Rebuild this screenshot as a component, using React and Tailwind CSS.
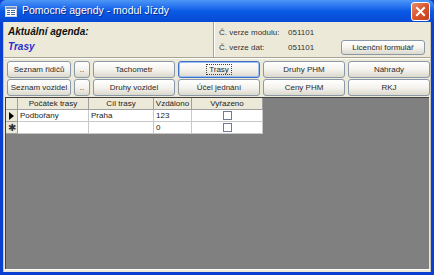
import React from 'react'

const font = { fontFamily: '"Liberation Sans", Arial, sans-serif' }

function XpButton({ children, focused, className = '' }) {
  return (
    <div
      className={`flex items-center justify-center h-[17px] rounded-[3px] border text-[8px] text-[#2a2a2a] bg-gradient-to-b from-white via-[#f4f3ee] to-[#dcd9cc] ${
        focused ? 'border-[#3c6fc8] shadow-[inset_0_0_0_1px_#9cc0f4]' : 'border-[#8a98a8]'
      } ${className}`}
    >
      {focused ? (
        <span className="px-[2px] border border-dotted border-[#444] leading-[9px]">{children}</span>
      ) : (
        children
      )}
    </div>
  )
}

const rowsTop = ['Seznam řidičů', '..', 'Tachometr', 'Trasy', 'Druhy PHM', 'Náhrady']
const rowsBottom = ['Seznam vozidel', '..', 'Druhy vozidel', 'Účel jednání', 'Ceny PHM', 'RKJ']
const widths = ['w-[64px]', 'w-[16px]', 'w-[82px]', 'w-[82px]', 'w-[82px]', 'w-[82px]']

function ButtonRow({ labels }) {
  return (
    <div className="flex gap-[3px]">
      {labels.map((l, i) => (
        <XpButton key={i} focused={l === 'Trasy'} className={widths[i]}>
          {l}
        </XpButton>
      ))}
    </div>
  )
}

function Checkbox() {
  return <div className="w-[9px] h-[9px] bg-white border border-[#6f7c8c]" />
}

export default function App() {
  return (
    <div className="w-[434px] h-[275px] flex flex-col bg-[#0a3fd0] overflow-hidden" style={font}>
      {/* Title bar */}
      <div className="h-[22px] shrink-0 flex items-center pl-[5px] pr-[4px] bg-gradient-to-b from-[#4d96f7] via-[#0a5ae6] to-[#0749d4] rounded-t-[6px]">
        <svg width="12" height="11" viewBox="0 0 12 11" className="shrink-0">
          <rect x="0.5" y="0.5" width="11" height="10" fill="#fff" stroke="#c9d4e6" />
          <rect x="1" y="1" width="10" height="2" fill="#6d8fc8" />
          <rect x="2" y="4" width="3" height="1" fill="#4a68a8" />
          <rect x="6" y="4" width="4" height="1" fill="#4a68a8" />
          <rect x="2" y="6" width="3" height="1" fill="#4a68a8" />
          <rect x="6" y="6" width="4" height="1" fill="#4a68a8" />
          <rect x="2" y="8" width="3" height="1" fill="#4a68a8" />
          <rect x="6" y="8" width="4" height="1" fill="#4a68a8" />
        </svg>
        <span className="ml-[5px] text-white text-[10.5px] [text-shadow:1px_1px_0_#0a2a8a]">
          Pomocné agendy - modul Jízdy
        </span>
        <div className="ml-auto w-[19px] h-[19px] rounded-[3px] border border-white bg-gradient-to-br from-[#e88a6a] via-[#d9562c] to-[#c2401a] flex items-center justify-center">
          <svg width="11" height="11" viewBox="0 0 11 11">
            <path d="M2 2 L9 9 M9 2 L2 9" stroke="#fff" strokeWidth="2" strokeLinecap="square" />
          </svg>
        </div>
      </div>

      {/* Window body */}
      <div className="flex-1 flex flex-col mx-[3px] mb-[3px] bg-[#ece9d8] border-x border-[#c7c4b7]">
        {/* Header */}
        <div className="h-[36px] flex border-b border-[#a7a496] shadow-[0_1px_0_#fff]">
          <div className="w-[209px] pl-[4px] pt-[4px] flex flex-col">
            <span className="text-[10px] font-bold italic text-[#111] leading-[12px]">Aktuální agenda:</span>
            <span className="mt-[3px] text-[10px] font-bold italic text-[#2a2ad0] leading-[12px]">Trasy</span>
          </div>
          <div className="flex-1 border-l border-[#a7a496] shadow-[inset_1px_0_0_#fff] pl-[5px] pt-[3px] text-[8px] text-[#333] leading-[10px]">
            <div className="flex h-[15px] items-center">
              <span className="w-[69px]">Č. verze modulu:</span>
              <span>051101</span>
            </div>
            <div className="flex h-[15px] items-center">
              <span className="w-[69px]">Č. verze dat:</span>
              <span>051101</span>
              <XpButton className="ml-auto mr-[5px] w-[84px] !h-[15px]">Licenční formulář</XpButton>
            </div>
          </div>
        </div>

        {/* Buttons */}
        <div className="pt-[3px] pl-[3px] flex flex-col gap-[1px]">
          <ButtonRow labels={rowsTop} />
          <ButtonRow labels={rowsBottom} />
        </div>

        {/* Datasheet area */}
        <div className="flex-1 mt-[1px] mx-[1px] bg-[#808080] border-t border-l border-[#404040]">
          <div className="w-[257px] text-[8px] text-[#222]">
            <div className="flex h-[12px] bg-[#ece9d8]">
              <div className="w-[12px] border-r border-b border-[#a0a0a0]" />
              <div className="w-[71px] border-r border-b border-[#a0a0a0] text-center leading-[11px]">Počátek trasy</div>
              <div className="w-[65px] border-r border-b border-[#a0a0a0] text-center leading-[11px]">Cíl trasy</div>
              <div className="w-[38px] border-r border-b border-[#a0a0a0] text-center leading-[11px]">Vzdálono</div>
              <div className="w-[71px] border-r border-b border-[#a0a0a0] text-center leading-[11px]">Vyřazeno</div>
            </div>
            <div className="flex h-[12px] bg-white">
              <div className="w-[12px] bg-[#ece9d8] border-r border-b border-[#a0a0a0] flex items-center justify-center">
                <svg width="5" height="8" viewBox="0 0 5 8"><path d="M0 0 L5 4 L0 8 Z" fill="#000" /></svg>
              </div>
              <div className="w-[71px] border-r border-b border-[#c8c8c8] pl-[2px] leading-[11px]">Podbořany</div>
              <div className="w-[65px] border-r border-b border-[#c8c8c8] pl-[2px] leading-[11px]">Praha</div>
              <div className="w-[38px] border-r border-b border-[#c8c8c8] pl-[2px] leading-[11px]">123</div>
              <div className="w-[71px] border-r border-b border-[#c8c8c8] flex items-center justify-center"><Checkbox /></div>
            </div>
            <div className="flex h-[12px] bg-white">
              <div className="w-[12px] bg-[#ece9d8] border-r border-b border-[#a0a0a0] flex items-center justify-center text-[10px] leading-[11px] text-[#333]">✱</div>
              <div className="w-[71px] border-r border-b border-[#c8c8c8]" />
              <div className="w-[65px] border-r border-b border-[#c8c8c8]" />
              <div className="w-[38px] border-r border-b border-[#c8c8c8] pl-[2px] leading-[11px]">0</div>
              <div className="w-[71px] border-r border-b border-[#c8c8c8] flex items-center justify-center"><Checkbox /></div>
            </div>
          </div>
        </div>
        <div className="h-[3px] bg-[#ece9d8] border-t border-[#fff]" />
      </div>
    </div>
  )
}
